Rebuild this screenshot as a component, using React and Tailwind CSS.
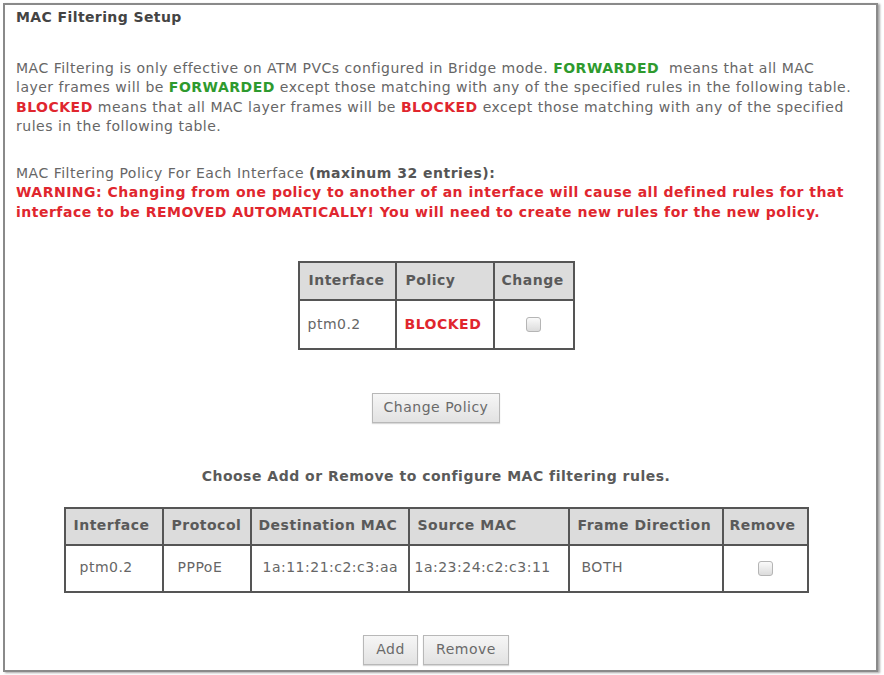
export default function App() {
  const font = { fontFamily: '"DejaVu Sans", Verdana, sans-serif' };
  const Check = () => (
    <span className="inline-block w-[15px] h-[15px] rounded-[3px] border border-[#b5b5b5] bg-gradient-to-b from-[#fafafa] to-[#dcdcdc] align-middle" />
  );
  const Btn = ({ children, className = "" }) => (
    <button className={"h-[30px] border border-[#b8b8b8] bg-gradient-to-b from-[#f6f6f6] to-[#e2e2e2] text-[#6a6a6a] text-[14px] tracking-[0.5px] shadow-[0_1px_1px_rgba(0,0,0,0.15)] " + className}>
      {children}
    </button>
  );
  const th = "border-2 border-[#555] bg-[#dcdcdc] font-bold text-[#5a5a5a] text-left";
  const td = "border-2 border-[#555] bg-white text-[#666] px-[8px]";
  const red = "text-[#e0262e]";
  const green = "text-[#2e9a2e]";
  return (
    <div className="w-[884px] h-[675px] bg-white p-[3px] pr-[6px] pb-[3px]" style={font}>
      <div className="h-full border-2 border-[#8a8a8a] shadow-[2px_1px_2px_rgba(0,0,0,0.35)] px-[11px] pt-[3px] text-[14px] tracking-[0.5px] text-[#666] leading-[19.5px]">
        <div className="font-bold text-[#444] text-[14px] tracking-[0.4px]">MAC Filtering Setup</div>
        <div className="mt-[31px] whitespace-nowrap">
          MAC Filtering is only effective on ATM PVCs configured in Bridge mode. <b className={green}>FORWARDED</b>&nbsp; means that all MAC
          <br />
          layer frames will be <b className={green}>FORWARDED</b> except those matching with any of the specified rules in the following table.
          <br />
          <b className={red}>BLOCKED</b> means that all MAC layer frames will be <b className={red}>BLOCKED</b> except those matching with any of the specified
          <br />
          rules in the following table.
        </div>
        <div className="mt-[27px] whitespace-nowrap">
          MAC Filtering Policy For Each Interface <b className="text-[#555]">(maxinum 32 entries):</b>
          <br />
          <b className={red}>
            WARNING: Changing from one policy to another of an interface will cause all defined rules for that
            <br />
            interface to be REMOVED AUTOMATICALLY! You will need to create new rules for the new policy.
          </b>
        </div>

        <div className="pr-[9px]">
          <div className="flex justify-center mt-[39px]">
            <table className="border-collapse">
              <thead>
                <tr className="h-[38px]">
                  <th className={th + " px-[9px] w-[97px]"}>Interface</th>
                  <th className={th + " px-[9px] w-[98px]"}>Policy</th>
                  <th className={th + " px-[7px] w-[80px]"}>Change</th>
                </tr>
              </thead>
              <tbody>
                <tr className="h-[49px]">
                  <td className={td}>ptm0.2</td>
                  <td className={td + " font-bold " + red}>BLOCKED</td>
                  <td className={td + " px-0 text-center"}><Check /></td>
                </tr>
              </tbody>
            </table>
          </div>

          <div className="flex justify-center mt-[43px]">
            <Btn className="w-[128px]">Change Policy</Btn>
          </div>

          <div className="text-center font-bold text-[#5a5a5a] mt-[44px]">
            Choose Add or Remove to configure MAC filtering rules.
          </div>

          <div className="flex justify-center mt-[20px]">
            <table className="border-collapse">
              <thead>
                <tr className="h-[37px]">
                  <th className={th + " px-[8px] w-[98px]"}>Interface</th>
                  <th className={th + " px-[8px] w-[88px]"}>Protocol</th>
                  <th className={th + " px-[7px] w-[158px]"}>Destination MAC</th>
                  <th className={th + " px-[8px] w-[160px]"}>Source MAC</th>
                  <th className={th + " px-[8px] w-[154px]"}>Frame Direction</th>
                  <th className={th + " px-[6px] w-[85px]"}>Remove</th>
                </tr>
              </thead>
              <tbody>
                <tr className="h-[47px]">
                  <td className={td + " pl-[14px]"}>ptm0.2</td>
                  <td className={td + " pl-[14px]"}>PPPoE</td>
                  <td className={td + " pl-[11px]"}>1a:11:21:c2:c3:aa</td>
                  <td className={td + " pl-[5px]"}>1a:23:24:c2:c3:11</td>
                  <td className={td + " pl-[12px]"}>BOTH</td>
                  <td className={td + " text-center"}><Check /></td>
                </tr>
              </tbody>
            </table>
          </div>

          <div className="flex justify-center gap-[5px] mt-[42px]">
            <Btn className="w-[55px]">Add</Btn>
            <Btn className="w-[86px]">Remove</Btn>
          </div>
        </div>
      </div>
    </div>
  );
}
